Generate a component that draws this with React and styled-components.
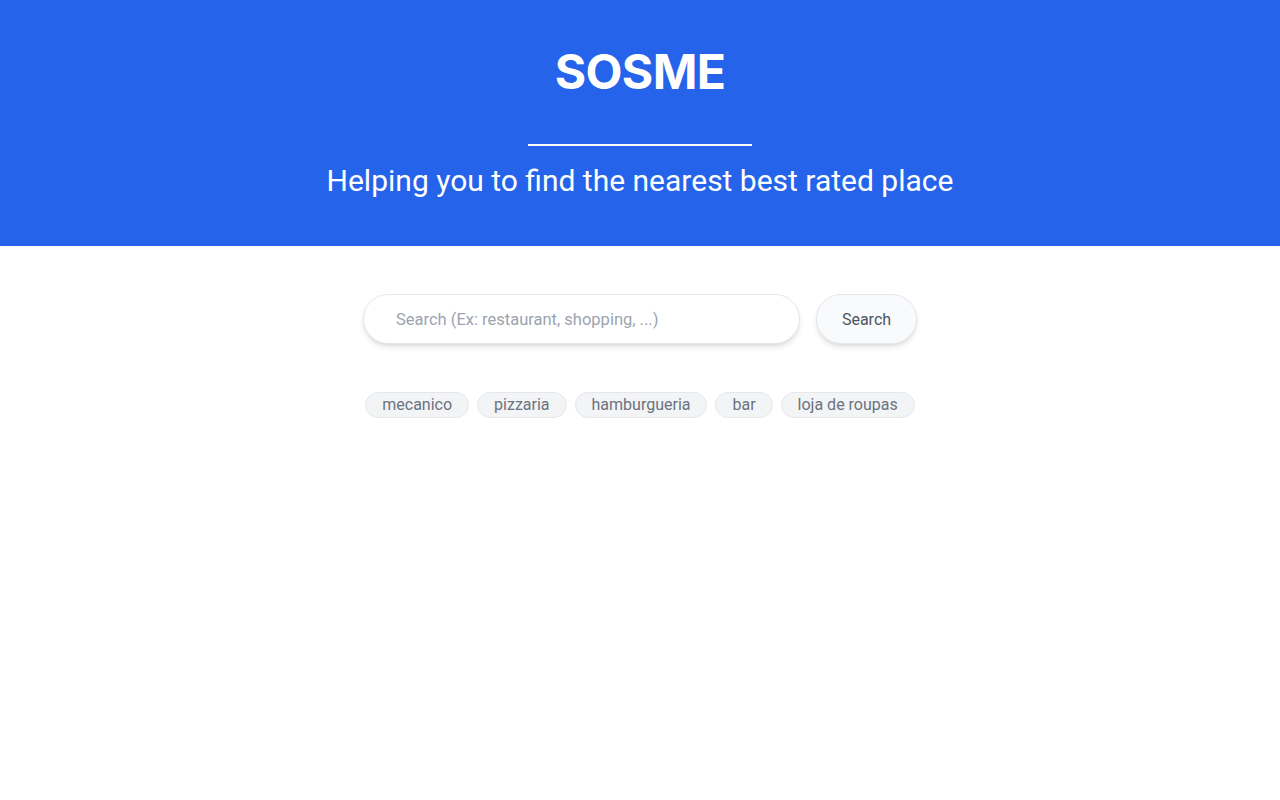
import React from "react";
import styled, { createGlobalStyle } from "styled-components";

const Global = createGlobalStyle`
  html, body { margin: 0; padding: 0; background: #fff; }
  body { font-family: Roboto, "Liberation Sans", sans-serif; }
  * { box-sizing: border-box; }
`;

const Header = styled.header`
  background: #2563eb;
  height: 246px;
  display: flex;
  flex-direction: column;
  align-items: center;
  color: #fff;
  padding-top: 44px;
`;

const Title = styled.h1`
  margin: 0;
  font-family: Inter, "Liberation Sans", sans-serif;
  font-weight: 700;
  font-size: 48px;
  line-height: 56px;
  letter-spacing: -0.6px;
`;

const Divider = styled.div`
  width: 224px;
  height: 2px;
  background: #fff;
  margin-top: 44px;
`;

const Subtitle = styled.p`
  margin: 17px 0 0;
  font-family: Roboto, sans-serif;
  font-weight: 400;
  font-size: 30px;
  line-height: 36px;
`;

const Main = styled.main`
  display: flex;
  flex-direction: column;
  align-items: center;
  padding-top: 48px;
`;

const SearchRow = styled.form`
  display: flex;
  gap: 16px;
  width: 554px;
`;

const Input = styled.input`
  flex: 1;
  height: 50px;
  border: 1px solid #e5e7eb;
  border-radius: 9999px;
  padding: 0 32px;
  font-family: Roboto, sans-serif;
  font-size: 16.5px;
  color: #374151;
  box-shadow: 0 4px 6px -1px rgba(0,0,0,0.1), 0 2px 4px -2px rgba(0,0,0,0.1);
  outline: none;
  &::placeholder { color: #9ca3af; }
`;

const Button = styled.button`
  width: 101px;
  height: 50px;
  border: 1px solid #e5e7eb;
  border-radius: 9999px;
  background: #f9fafb;
  color: #4b5563;
  font-family: Roboto, sans-serif;
  font-size: 16px;
  box-shadow: 0 4px 6px -1px rgba(0,0,0,0.1), 0 2px 4px -2px rgba(0,0,0,0.1);
  cursor: pointer;
`;

const Tags = styled.div`
  display: flex;
  gap: 8px;
  margin-top: 48px;
`;

const Tag = styled.button`
  height: 26px;
  padding: 0 16px;
  border: 1px solid #e5e7eb;
  border-radius: 9999px;
  background: #f3f4f6;
  color: #6b7280;
  font-family: Roboto, sans-serif;
  font-size: 16px;
  line-height: 24px;
  cursor: pointer;
`;

const tags = ["mecanico", "pizzaria", "hamburgueria", "bar", "loja de roupas"];

export default function App() {
  return (
    <>
      <Global />
      <Header>
        <Title>SOSME</Title>
        <Divider />
        <Subtitle>Helping you to find the nearest best rated place</Subtitle>
      </Header>
      <Main>
        <SearchRow onSubmit={(e) => e.preventDefault()}>
          <Input placeholder="Search (Ex: restaurant, shopping, ...)" />
          <Button type="submit">Search</Button>
        </SearchRow>
        <Tags>
          {tags.map((t) => (
            <Tag key={t}>{t}</Tag>
          ))}
        </Tags>
      </Main>
    </>
  );
}
